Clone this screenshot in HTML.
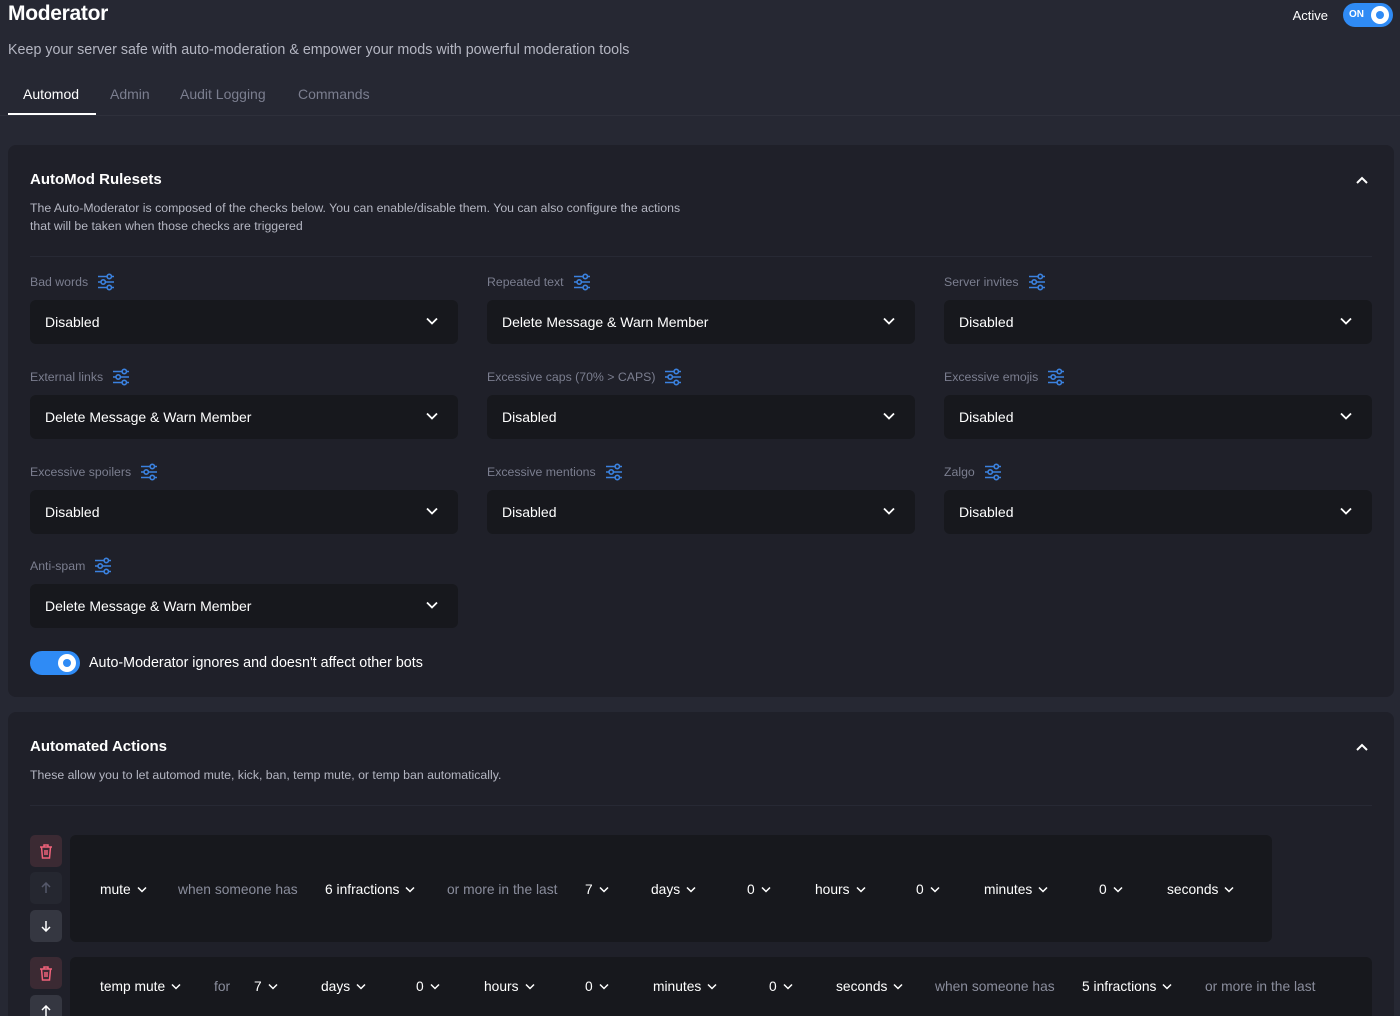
<!DOCTYPE html>
<html><head><meta charset="utf-8"><style>
*{box-sizing:border-box;margin:0;padding:0}
html{width:1400px;height:1016px;overflow:hidden}
body{width:1400px;height:1016px;overflow:hidden;background:#262833;font-family:"Liberation Sans",sans-serif;color:#fff;position:relative}
.a{position:absolute;white-space:nowrap}
h1{position:absolute;left:8px;top:2px;font-size:21px;font-weight:bold;letter-spacing:-0.3px}
.sub{left:8px;top:42px;font-size:14.3px;color:#b4b6c2}
.tab{top:86px;font-size:14px;color:#7b7e8f}
.card{position:absolute;left:8px;width:1386px;background:#1f2029;border-radius:8px}
.ct{font-size:15px;font-weight:bold;left:22px}
.cd{font-size:12.3px;color:#b4b6c2;left:22px;line-height:18px}
.hr{position:absolute;left:22px;right:22px;height:1px;background:#272934}
.lbl{font-size:12.3px;color:#7b7e8f;display:flex;align-items:center;gap:9px}
.sel{position:absolute;width:428px;height:44px;background:#17181d;border-radius:6px;font-size:14px;padding-left:15px;line-height:44px}
.sel svg{position:absolute;right:20px;top:17px}
.box{position:absolute;background:#17181d;border-radius:6px}
.it{font-size:13.8px;color:#fff;display:flex;align-items:center;gap:6px}
.g{font-size:13.8px;color:#8a8d9c}
.btn{position:absolute;width:32px;height:32px;border-radius:5px;display:flex;align-items:center;justify-content:center}
</style></head><body>
<h1>Moderator</h1>
<div class="a" style="right:72px;top:8px;font-size:13px">Active</div>
<div class="a" style="left:1343px;top:3px;width:50px;height:24px;border-radius:12px;background:#2f8bf5"><span style="position:absolute;left:6px;top:6px;font-size:10px;font-weight:bold">ON</span><span style="position:absolute;right:4px;top:3px;width:18px;height:18px;border-radius:50%;background:#fff"><span style="position:absolute;left:5px;top:5px;width:8px;height:8px;border-radius:50%;background:#2f8bf5"></span></span></div>
<div class="a sub">Keep your server safe with auto-moderation &amp; empower your mods with powerful moderation tools</div>
<div class="a tab" style="left:23px;color:#fff">Automod</div>
<div class="a tab" style="left:110px">Admin</div>
<div class="a tab" style="left:180px">Audit Logging</div>
<div class="a tab" style="left:298px">Commands</div>
<div class="a" style="left:8px;top:113px;width:88px;height:2px;background:#fff"></div>
<div class="a" style="left:0;right:0;top:115px;height:1px;background:#2e303b"></div>

<div class="card" style="top:145px;height:552px">
<div class="a ct" style="top:26px">AutoMod Rulesets</div>
<svg class="a" style="right:26px;top:31px" width="12" height="8" viewBox="0 0 12 8"><path d="M1 7L6 2L11 7" stroke="#fff" stroke-width="2" fill="none"/></svg>
<div class="a cd" style="top:54px">The Auto-Moderator is composed of the checks below. You can enable/disable them. You can also configure the actions<br>that will be taken when those checks are triggered</div>
<div class="hr" style="top:111px"></div>
</div>

<div class="card" style="top:712px;height:304px;border-radius:8px 8px 0 0">
<div class="a ct" style="top:26px">Automated Actions</div>
<svg class="a" style="right:26px;top:31px" width="12" height="8" viewBox="0 0 12 8"><path d="M1 7L6 2L11 7" stroke="#fff" stroke-width="2" fill="none"/></svg>
<div class="a cd" style="top:54px">These allow you to let automod mute, kick, ban, temp mute, or temp ban automatically.</div>
<div class="hr" style="top:93px"></div>
</div>

<div id="rs"></div>
<div class="a" style="left:30px;top:651px;width:50px;height:24px;border-radius:12px;background:#2f8bf5"><span style="position:absolute;right:4px;top:3px;width:18px;height:18px;border-radius:50%;background:#fff"><span style="position:absolute;left:5px;top:5px;width:8px;height:8px;border-radius:50%;background:#2f8bf5"></span></span></div>
<div class="a" style="left:89px;top:655px;font-size:14.3px">Auto-Moderator ignores and doesn't affect other bots</div>

<div class="btn" style="left:30px;top:835px;background:#3b2a33"><svg width="14" height="15" viewBox="0 0 14 15" fill="none" stroke="#f0627a" stroke-width="1.5"><path d="M1 3h12M5 3V1h4v2M2.5 3l1 11h7l1-11M6 6v5M8 6v5"/></svg></div>
<div class="btn" style="left:30px;top:872px;background:#252730"><svg width="10" height="12" viewBox="0 0 10 12" fill="none" stroke="#55586a" stroke-width="1.5"><path d="M5 11V1M1 5l4-4 4 4"/></svg></div>
<div class="btn" style="left:30px;top:910px;background:#353741"><svg width="10" height="12" viewBox="0 0 10 12" fill="none" stroke="#fff" stroke-width="1.5"><path d="M5 1v10M1 7l4 4 4-4"/></svg></div>
<div class="box" style="left:70px;top:835px;width:1202px;height:107px"></div>
<div class="btn" style="left:30px;top:957px;background:#3b2a33"><svg width="14" height="15" viewBox="0 0 14 15" fill="none" stroke="#f0627a" stroke-width="1.5"><path d="M1 3h12M5 3V1h4v2M2.5 3l1 11h7l1-11M6 6v5M8 6v5"/></svg></div>
<div class="btn" style="left:30px;top:995px;background:#353741"><svg width="10" height="12" viewBox="0 0 10 12" fill="none" stroke="#fff" stroke-width="1.5"><path d="M5 11V1M1 5l4-4 4 4"/></svg></div>
<div class="box" style="left:70px;top:957px;width:1302px;height:59px;border-radius:6px 6px 0 0"></div>
<div id="ac"></div>

<script>
var ic='<svg width="18" height="18" viewBox="0 0 18 18" fill="none" stroke="#3b82e0" stroke-width="1.6"><path d="M1 3.5h8.5M15 3.5h2M1 9h2.5M9 9h8M1 14.5h8.5M15 14.5h2"/><circle cx="12.3" cy="3.5" r="2.2"/><circle cx="6.2" cy="9" r="2.2"/><circle cx="12.3" cy="14.5" r="2.2"/></svg>';
var ch='<svg width="12" height="8" viewBox="0 0 12 8"><path d="M1 1.5L6 6.5L11 1.5" stroke="#fff" stroke-width="1.8" fill="none"/></svg>';
var sc='<svg width="10" height="7" viewBox="0 0 10 7"><path d="M1 1.5L5 5.5L9 1.5" stroke="#fff" stroke-width="1.5" fill="none"/></svg>';
var R=[["Bad words","Disabled"],["Repeated text","Delete Message &amp; Warn Member"],["Server invites","Disabled"],["External links","Delete Message &amp; Warn Member"],["Excessive caps (70% &gt; CAPS)","Disabled"],["Excessive emojis","Disabled"],["Excessive spoilers","Disabled"],["Excessive mentions","Disabled"],["Zalgo","Disabled"],["Anti-spam","Delete Message &amp; Warn Member"]];
var X=[30,487,944],Y=[300,395,490,584],h='';
R.forEach(function(r,i){var x=X[i%3],y=Y[Math.floor(i/3)];
h+='<div class="a lbl" style="left:'+x+'px;top:'+(y-27)+'px">'+r[0]+ic+'</div><div class="sel" style="left:'+x+'px;top:'+y+'px">'+r[1]+ch+'</div>';});
document.getElementById('rs').innerHTML=h;
function row(y,a){var s='';a.forEach(function(t){s+='<div class="a '+(t[2]?'g':'it')+'" style="left:'+t[0]+'px;top:'+(y-7)+'px">'+t[1]+(t[2]?'':sc)+'</div>';});return s;}
document.getElementById('ac').innerHTML=row(889,[[100,'mute'],[178,'when someone has',1],[325,'6 infractions'],[447,'or more in the last',1],[585,'7'],[651,'days'],[747,'0'],[815,'hours'],[916,'0'],[984,'minutes'],[1099,'0'],[1167,'seconds']])+row(986,[[100,'temp mute'],[214,'for',1],[254,'7'],[321,'days'],[416,'0'],[484,'hours'],[585,'0'],[653,'minutes'],[769,'0'],[836,'seconds'],[935,'when someone has',1],[1082,'5 infractions'],[1205,'or more in the last',1]]);
</script>
</body></html>
